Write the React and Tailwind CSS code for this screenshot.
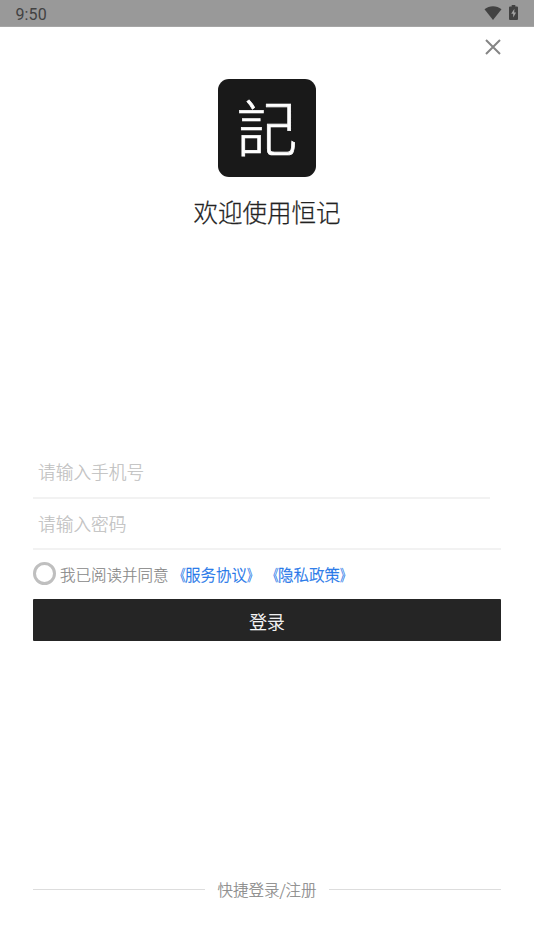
import React, { useState } from 'react';

const StatusBar = () => (
  <div className="flex h-[27px] shrink-0 items-center justify-between border-b border-[#a6a6a6] bg-[#999999] pl-[15.500px] pr-4 text-[#424242]">
    <span className="pt-[3px] font-[Roboto] text-base font-normal leading-none tracking-[0.1px]">9:50</span>
    <div className="flex items-start gap-[7px]">
      <svg aria-hidden className="h-[14px] w-[18px]" viewBox="0 0 18 14" fill="currentColor">
        <path d="M9 14 .5 3.200C3 1.200 5.800.2 9 .2s6 1 8.500 3L9 14Z" />
      </svg>
      <svg aria-hidden className="-mt-px h-[15px] w-[9px]" viewBox="0 0 9 15">
        <path fill="currentColor" d="M2.700 0h3.600v1.500H8q1 0 1 1V14q0 1-1 1H1q-1 0-1-1V2.500q0-1 1-1h1.700Z" />
        <path fill="#a3a3a3" d="M5.400 3.700 2.200 8.800h2v3.800l2.900-5.200H5.200Z" />
      </svg>
    </div>
  </div>
);

const DocLink = ({ href, children }) => (
  <a href={href} className="flex text-[#1a73e8] [-webkit-text-stroke:0.3px]">
    <span className="origin-right scale-x-[0.7]">《</span>
    <span>{children}</span>
    <span className="origin-left scale-x-[0.7]">》</span>
  </a>
);

const App = () => {
  const [agreed, setAgreed] = useState(false);

  return (
    <div
      lang="zh-CN"
      className="flex h-[950px] w-[534px] flex-col overflow-hidden bg-white font-['Noto_Sans_CJK_SC',sans-serif] font-light"
    >
      <StatusBar />

      <div className="flex h-[52px] shrink-0 justify-end pr-[33px] pt-3">
        <button type="button" aria-label="关闭" className="size-4 text-[#858585]">
          <svg aria-hidden className="size-4" viewBox="0 0 16 16" fill="none" stroke="currentColor" strokeWidth="2">
            <path d="m1 1 14 14M15 1 1 15" />
          </svg>
        </button>
      </div>

      <header className="flex h-[367px] shrink-0 flex-col items-center">
        <div className="flex size-[98px] items-center justify-center overflow-hidden rounded-[11px] bg-[#191919] pb-[5px] font-['Noto_Sans_CJK_TC',sans-serif] text-[61px] leading-none text-white [-webkit-text-stroke:0.7px]">
          記
        </div>
        <h1 className="mt-[17px] text-[24.500px] leading-9 text-[#222222] [-webkit-text-stroke:0.25px]">欢迎使用恒记</h1>
      </header>

      <form className="flex shrink-0 flex-col px-[33px]" onSubmit={(event) => event.preventDefault()}>
        <input
          type="tel"
          placeholder="请输入手机号"
          className="mr-[11px] h-[53px] border-b-2 border-[#f2f2f2] px-[5px] pb-px text-[17.700px] text-[#222222] outline-none [-webkit-text-stroke:0.2px] placeholder:text-[#bfbfbf]"
        />
        <input
          type="password"
          placeholder="请输入密码"
          className="h-[51px] border-b-2 border-[#f2f2f2] px-[5px] pb-[2px] text-[17.700px] text-[#222222] outline-none [-webkit-text-stroke:0.2px] placeholder:text-[#bfbfbf]"
        />
        <div className="flex h-[49px] items-center whitespace-nowrap text-[15.500px] text-[#888888]">
          <button
            type="button"
            role="checkbox"
            aria-checked={agreed}
            aria-label="同意"
            onClick={() => setAgreed(!agreed)}
            className={`mb-[2px] mr-1 size-[23px] rounded-full border-[3px] border-[#bfbfbf] ${agreed ? 'bg-[#222222]' : 'bg-white'}`}
          />
          <span className="mr-px [-webkit-text-stroke:0.2px]">我已阅读并同意</span>
          <DocLink href="#terms">服务协议</DocLink>
          <DocLink href="#privacy">隐私政策</DocLink>
        </div>
        <button type="submit" className="h-[42px] rounded-[1px] bg-[#252525] pt-[2px] text-[17.700px] text-white [-webkit-text-stroke:0.3px]">
          登录
        </button>
      </form>

      <footer className="mt-auto flex h-[122px] shrink-0 items-center gap-3 px-[33px]">
        <div className="h-px flex-1 bg-[#dddddd]" />
        <span className="pt-[2px] text-[15.500px] text-[#888888] [-webkit-text-stroke:0.2px]">快捷登录/注册</span>
        <div className="h-px flex-1 bg-[#dddddd]" />
      </footer>
    </div>
  );
};

export default App;
